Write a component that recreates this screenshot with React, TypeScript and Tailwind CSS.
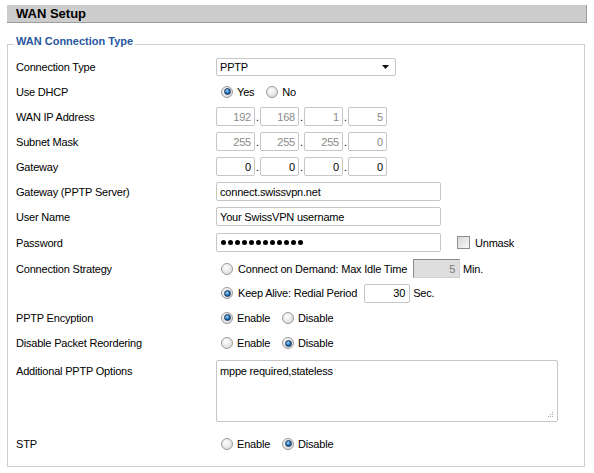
import React from 'react'

function Radio({ checked = false }: { checked?: boolean }) {
  return (
    <span className="w-[12px] h-[12px] shrink-0 rounded-full border border-[#9a9a9a] bg-[radial-gradient(circle_at_40%_35%,#ffffff,#d2d2d2)] flex items-center justify-center">
      {checked && (
        <span className="w-[7px] h-[7px] rounded-full border border-[#17375e] bg-[radial-gradient(circle_at_40%_35%,#9fd6ff,#1a64ad_60%,#0d3f75)]" />
      )}
    </span>
  )
}

function RadioGroup({ options, selected }: { options: string[]; selected: number }) {
  return (
    <div className="flex items-center">
      {options.map((o, i) => (
        <span key={o} className="flex items-center ml-[5px] mr-[7px]">
          <Radio checked={i === selected} />
          <span className="ml-[4px]">{o}</span>
        </span>
      ))}
    </div>
  )
}

function Row({ label, children, className = 'h-[25px]' }: { label: string; children?: React.ReactNode; className?: string }) {
  return (
    <div className={`flex items-center ${className}`}>
      <div className="w-[200px] shrink-0">{label}</div>
      {children}
    </div>
  )
}

function IpBoxes({ parts, muted }: { parts: string[]; muted?: boolean }) {
  return (
    <div className="flex items-center">
      {parts.map((p, i) => (
        <React.Fragment key={i}>
          <div
            className={`w-[39px] h-[19px] border border-[#c6c6c6] rounded-[2px] bg-white flex items-center justify-end pr-[3px] ${
              muted ? 'text-[#8a8a8a]' : 'text-black'
            }`}
          >
            {p}
          </div>
          {i < 3 && <span className="w-[5px] text-center">.</span>}
        </React.Fragment>
      ))}
    </div>
  )
}

function TextBox({ value }: { value: string }) {
  return (
    <div className="w-[225px] h-[19px] border border-[#c6c6c6] rounded-[2px] bg-white flex items-center pl-[3px]">
      {value}
    </div>
  )
}

export default function App() {
  return (
    <div className="w-[594px] h-[473px] bg-white pl-[7px] pt-[5px] font-['Liberation_Sans',Arial,sans-serif] text-[11px] text-black leading-[14px] tracking-[-0.2px]">
      <div className="w-[580px] h-[18px] bg-[#cccccc] border-b border-r border-[#9c9c9c] flex items-center pl-[9px]">
        <span className="text-[13px] font-bold tracking-normal">WAN Setup</span>
      </div>

      <fieldset className="w-[578px] h-[433px] mt-[11px] border border-[#cfcfcf] pl-[8px] pr-[8px] pb-[10px]">
        <legend className="px-[2px] -ml-[2px] pb-[6px] font-bold text-[11px] text-[#2a58a0] leading-[14px] tracking-normal">
          WAN Connection Type
        </legend>

        <Row label="Connection Type">
          <div className="w-[180px] h-[18px] border border-[#c6c6c6] rounded-[2px] bg-white flex items-center justify-between pl-[3px] pr-[6px]">
            <span>PPTP</span>
            <svg width="7" height="4" viewBox="0 0 7 4">
              <path d="M0 0h7L3.5 4z" fill="#111" />
            </svg>
          </div>
        </Row>

        <Row label="Use DHCP">
          <RadioGroup options={['Yes', 'No']} selected={0} />
        </Row>

        <Row label="WAN IP Address">
          <IpBoxes parts={['192', '168', '1', '5']} muted />
        </Row>
        <Row label="Subnet Mask">
          <IpBoxes parts={['255', '255', '255', '0']} muted />
        </Row>
        <Row label="Gateway">
          <IpBoxes parts={['0', '0', '0', '0']} />
        </Row>

        <Row label="Gateway (PPTP Server)">
          <TextBox value="connect.swissvpn.net" />
        </Row>
        <Row label="User Name">
          <TextBox value="Your SwissVPN username" />
        </Row>

        <Row label="Password" className="h-[27px]">
          <div className="w-[225px] h-[19px] border border-[#c6c6c6] rounded-[2px] bg-white flex items-center pl-[4px] gap-[2px]">
            {Array.from({ length: 12 }).map((_, i) => (
              <span key={i} className="w-[5px] h-[5px] rounded-full bg-black" />
            ))}
          </div>
          <span className="ml-[16px] w-[13px] h-[13px] border border-[#8e8e8e] bg-[linear-gradient(135deg,#d8d8d8,#f6f6f6)]" />
          <span className="ml-[5px]">Unmask</span>
        </Row>

        <div className="flex">
          <div className="w-[200px] shrink-0 h-[25px] flex items-center">Connection Strategy</div>
          <div className="flex flex-col">
            <div className="h-[25px] flex items-center">
              <span className="ml-[5px]">
                <Radio />
              </span>
              <span className="ml-[5px]">Connect on Demand: Max Idle Time</span>
              <div className="ml-[6px] w-[47px] h-[19px] border border-[#d0d0d0] border-t-[#8a8a8a] border-l-[#8a8a8a] bg-[#dedede] text-[#7a7a7a] flex items-center justify-end pr-[4px]">
                5
              </div>
              <span className="ml-[3px]">Min.</span>
            </div>
            <div className="h-[24px] flex items-center">
              <span className="ml-[5px]">
                <Radio checked />
              </span>
              <span className="ml-[5px]">Keep Alive: Redial Period</span>
              <div className="ml-[7px] w-[46px] h-[19px] border border-[#c6c6c6] rounded-[2px] bg-white flex items-center justify-end pr-[4px]">
                30
              </div>
              <span className="ml-[3px]">Sec.</span>
            </div>
          </div>
        </div>

        <Row label="PPTP Encyption">
          <RadioGroup options={['Enable', 'Disable']} selected={0} />
        </Row>
        <Row label="Disable Packet Reordering" className="h-[26px]">
          <RadioGroup options={['Enable', 'Disable']} selected={1} />
        </Row>

        <div className="flex h-[75px] pt-[4px]">
          <div className="w-[200px] shrink-0 pt-[4px]">Additional PPTP Options</div>
          <div className="relative w-[342px] h-[62px] border border-[#c6c6c6] rounded-[2px] bg-white pl-[3px] pt-[3px]">
            mppe required,stateless
            <svg className="absolute right-[3px] bottom-[3px]" width="7" height="7" viewBox="0 0 7 7">
              <g fill="#a8a8a8">
                <rect x="5" y="1" width="1" height="1" />
                <rect x="3" y="3" width="1" height="1" />
                <rect x="5" y="3" width="1" height="1" />
                <rect x="1" y="5" width="1" height="1" />
                <rect x="3" y="5" width="1" height="1" />
                <rect x="5" y="5" width="1" height="1" />
              </g>
            </svg>
          </div>
        </div>

        <Row label="STP">
          <RadioGroup options={['Enable', 'Disable']} selected={1} />
        </Row>
      </fieldset>
    </div>
  )
}
